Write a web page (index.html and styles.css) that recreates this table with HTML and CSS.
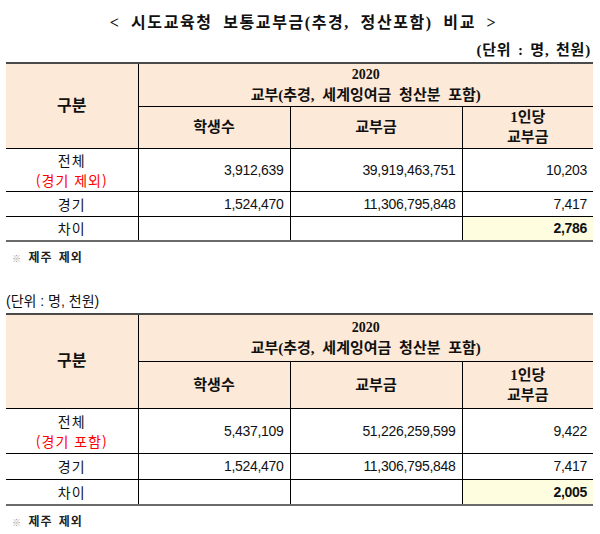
FILE: index.html
```html
<!DOCTYPE html>
<html lang="ko">
<head>
<meta charset="utf-8">
<link rel="stylesheet" href="styles.css">
</head>
<body>
<div class="page">
  <h1 class="title">&lt; 시도교육청 보통교부금(추경, 정산포함) 비교 &gt;</h1>
  <div class="unit unit-bold">(단위 : 명, 천원)</div>
  <table class="grid t1">
    <colgroup><col class="c1"><col class="c2"><col class="c3"><col class="c4"></colgroup>
    <tr class="h1">
      <th rowspan="2" class="hd big">구분</th>
      <th colspan="3" class="hd"><span class="yr">2020</span><br>교부(추경, 세계잉여금 청산분 포함)</th>
    </tr>
    <tr class="h2">
      <th class="hd">학생수</th>
      <th class="hd">교부금</th>
      <th class="hd">1인당<br>교부금</th>
    </tr>
    <tr class="r1">
      <td class="lbl">전체<br><span class="red">(경기 제외)</span></td>
      <td class="num">3,912,639</td>
      <td class="num">39,919,463,751</td>
      <td class="num">10,203</td>
    </tr>
    <tr class="r2">
      <td class="lbl">경기</td>
      <td class="num">1,524,470</td>
      <td class="num">11,306,795,848</td>
      <td class="num">7,417</td>
    </tr>
    <tr class="r3 last">
      <td class="lbl">차이</td>
      <td class="num"></td>
      <td class="num"></td>
      <td class="num diff">2,786</td>
    </tr>
  </table>
  <div class="note"><span class="mark">※</span> 제주 제외</div>

  <div class="unit unit-plain">(단위 : 명, 천원)</div>
  <table class="grid t2">
    <colgroup><col class="c1"><col class="c2"><col class="c3"><col class="c4"></colgroup>
    <tr class="h1">
      <th rowspan="2" class="hd big">구분</th>
      <th colspan="3" class="hd"><span class="yr">2020</span><br>교부(추경, 세계잉여금 청산분 포함)</th>
    </tr>
    <tr class="h2">
      <th class="hd">학생수</th>
      <th class="hd">교부금</th>
      <th class="hd">1인당<br>교부금</th>
    </tr>
    <tr class="r1">
      <td class="lbl">전체<br><span class="red">(경기 포함)</span></td>
      <td class="num">5,437,109</td>
      <td class="num">51,226,259,599</td>
      <td class="num">9,422</td>
    </tr>
    <tr class="r2">
      <td class="lbl">경기</td>
      <td class="num">1,524,470</td>
      <td class="num">11,306,795,848</td>
      <td class="num">7,417</td>
    </tr>
    <tr class="r3 last">
      <td class="lbl">차이</td>
      <td class="num"></td>
      <td class="num"></td>
      <td class="num diff">2,005</td>
    </tr>
  </table>
  <div class="note"><span class="mark">※</span> 제주 제외</div>
</div>
</body>
</html>
```
FILE: styles.css
```css
html, body {
  margin: 0;
  padding: 0;
  background: #ffffff;
}
.page {
  width: 600px;
  padding: 14px 7px 0 6px;
  box-sizing: border-box;
  font-family: "Liberation Sans", "Noto Sans CJK KR", sans-serif;
  color: #111;
}
.title {
  margin: 0;
  text-align: center;
  font-family: "Liberation Serif", "Noto Sans CJK KR", serif;
  font-size: 16px;
  font-weight: 700;
  line-height: 18px;
  letter-spacing: 1.6px;
  word-spacing: 5px;
  padding-left: 8px;
}
.unit {
  font-size: 13px;
  line-height: 18px;
}
.unit-bold {
  text-align: right;
  font-weight: 700;
  font-family: "Liberation Serif", "Noto Sans CJK KR", serif;
  font-size: 15px;
  letter-spacing: 0.8px;
  word-spacing: 2px;
  margin-top: 9px;
  padding-right: 2px;
}
.unit-plain {
  margin-top: 25px;
  font-size: 14px;
  line-height: 18px;
}
.grid {
  width: 587px;
  border-collapse: collapse;
  table-layout: fixed;
  margin-top: 3px;
}
.t2 { margin-top: 3px; }
.c1 { width: 132px; }
.c2 { width: 152px; }
.c3 { width: 172px; }
.c4 { width: 131px; }
.grid th, .grid td {
  padding: 0;
  border: 1px solid #000;
}
.grid tr > :first-child { border-left: none; }
.grid tr > :last-child { border-right: none; }
.grid .h1 th { border-top: 2px solid #4a4a4a; }
.grid .last td { border-bottom: 2px solid #6a6a6a; }
.hd {
  background: #fde9d7;
  font-family: "Liberation Serif", "Noto Sans CJK KR", serif;
  font-weight: 700;
  font-size: 15px;
  line-height: 20px;
  word-spacing: 4px;
  text-align: center;
  vertical-align: middle;
  color: #111;
}
.hd .yr { font-size: 14px; }
.hd.big { font-size: 16px; }
.t1 .h1 { height: 43px; }
.t1 .h2 { height: 42px; }
.t1 .r1 { height: 43px; }
.t1 .r2 { height: 25px; }
.t1 .r3 { height: 25px; }
.t2 .h1 { height: 47px; }
.t2 .h2 { height: 47px; }
.t2 .r1 { height: 45px; }
.t2 .r2 { height: 26px; }
.t2 .r3 { height: 26px; }
.lbl {
  text-align: center;
  font-family: "Noto Sans CJK KR", sans-serif;
  font-size: 14px;
  line-height: 20px;
  letter-spacing: 1px;
  vertical-align: middle;
}
.red { color: #ff0000; }
.num {
  text-align: right;
  padding-right: 6px !important;
  font-size: 14px;
  vertical-align: middle;
  letter-spacing: -0.3px;
}
.diff {
  background: #fefde0;
  font-weight: 700;
}
.note {
  margin-top: 7px;
  padding-left: 6px;
  font-family: "Noto Sans CJK KR", sans-serif;
  font-size: 12px;
  font-weight: 700;
  letter-spacing: 1px;
  word-spacing: 2px;
  line-height: 16px;
  color: #222;
}
.mark {
  color: #999;
  font-weight: 400;
  font-size: 9px;
}
```
